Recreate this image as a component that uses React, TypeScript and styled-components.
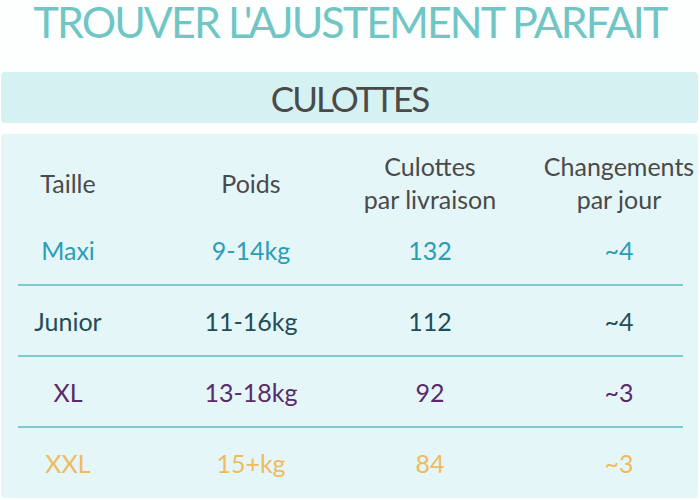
import React from "react";
import styled, { createGlobalStyle } from "styled-components";

const Global = createGlobalStyle`
  html, body { margin: 0; padding: 0; background: #fdfefe; }
  body { font-family: Lato, "Open Sans", sans-serif; width: 700px; height: 500px; overflow: hidden; }
`;

const Page = styled.div`
  width: 700px;
  height: 500px;
  display: flex;
  flex-direction: column;
`;

const Title = styled.h1`
  margin: 0 0 30px 0;
  height: 42px;
  line-height: 44px;
  font-size: 43px;
  font-weight: 400;
  color: #6fc6c5;
  text-align: center;
  white-space: nowrap;
  letter-spacing: -1.95px;
`;

const Banner = styled.div`
  margin: 0 2px 0 1px;
  height: 51px;
  background: #d6f1f2;
  border-radius: 4px;
  display: flex;
  align-items: center;
  justify-content: center;
  font-size: 35px;
  line-height: 1;
  color: #4a4a4a;
  font-weight: 400;
  letter-spacing: -2px;
  padding-top: 2px;
  box-sizing: border-box;
`;

const Panel = styled.div`
  margin: 11px 2px 0 1px;
  height: 364px;
  background: #e5f6f8;
  border-radius: 4px;
  padding: 0 15px 0 17px;
  overflow: hidden;
`;

const Row = styled.div<{ $head?: boolean; $last?: boolean }>`
  display: grid;
  grid-template-columns: 100px 266px 92px 286px;
  height: ${(p) => (p.$head ? 81 : p.$last ? 70 : 71)}px;
  padding-top: ${(p) => (p.$head ? 16 : 1)}px;
  box-sizing: border-box;
  border-bottom: ${(p) => (p.$head || p.$last ? "none" : "2px solid #7fcbcb")};
  align-items: center;
`;

const Cell = styled.div<{ $color: string }>`
  display: flex;
  flex-direction: column;
  align-items: center;
  justify-content: center;
  white-space: nowrap;
  font-size: 25px;
  line-height: 33px;
  color: ${(p) => p.$color};
`;

const rows = [
  { c: "#2a9eb6", v: ["Maxi", "9-14kg", "132", "~4"] },
  { c: "#1f4d58", v: ["Junior", "11-16kg", "112", "~4"] },
  { c: "#5a2b6b", v: ["XL", "13-18kg", "92", "~3"] },
  { c: "#f0ba5e", v: ["XXL", "15+kg", "84", "~3"] },
];

export default function App() {
  return (
    <Page>
      <Global />
      <Title>TROUVER L'AJUSTEMENT PARFAIT</Title>
      <Banner>CULOTTES</Banner>
      <Panel>
        <Row $head>
          <Cell $color="#4a4a4a">Taille</Cell>
          <Cell $color="#4a4a4a">Poids</Cell>
          <Cell $color="#4a4a4a">
            <span>Culottes</span>
            <span>par livraison</span>
          </Cell>
          <Cell $color="#4a4a4a">
            <span>Changements</span>
            <span>par jour</span>
          </Cell>
        </Row>
        {rows.map((r, i) => (
          <Row key={i} $last={i === rows.length - 1}>
            {r.v.map((t, j) => (
              <Cell key={j} $color={r.c}>
                {t}
              </Cell>
            ))}
          </Row>
        ))}
      </Panel>
    </Page>
  );
}
